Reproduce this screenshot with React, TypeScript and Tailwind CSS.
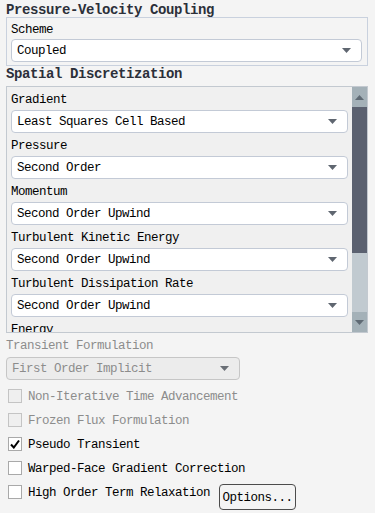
import React from "react";

const mono = "font-['Liberation_Mono','DejaVu_Sans_Mono',monospace]";

function Arrow({ color = "#5f6670" }: { color?: string }) {
  return (
    <svg width="9" height="5" viewBox="0 0 9 5" className="shrink-0">
      <polygon points="0,0 9,0 4.5,5" fill={color} />
    </svg>
  );
}

function Select({ value, disabled = false, className = "" }: { value: string; disabled?: boolean; className?: string }) {
  return (
    <div
      className={`flex h-[23px] items-center justify-between rounded-[4px] border pl-[5px] pr-[10px] ${
        disabled ? "border-[#c6c6c6] bg-[#ececec] text-[#8c8c8c]" : "border-[#c3cad6] bg-white text-black"
      } ${className}`}
    >
      <span className="pt-[2px] leading-none">{value}</span>
      <Arrow color={disabled ? "#6a6f76" : "#5f6670"} />
    </div>
  );
}

function Field({ label, value }: { label: string; value: string }) {
  return (
    <div>
      <div className="flex h-[23px] items-center pt-[3px] leading-none text-black">{label}</div>
      <Select value={value} />
    </div>
  );
}

function Check({ label, checked = false, disabled = false }: { label: string; checked?: boolean; disabled?: boolean }) {
  return (
    <div className="flex h-[24px] items-center gap-[6px] pl-[8px]">
      <div
        className={`flex h-[14px] w-[14px] items-center justify-center border ${
          disabled ? "border-[#c4c4c4] bg-[#efefef]" : "border-[#a9a9a9] bg-white"
        }`}
      >
        {checked && (
          <svg width="10" height="10" viewBox="0 0 10 10">
            <path d="M1 5.5 L3.8 8.5 L9 1.5" stroke="#000" strokeWidth="2" fill="none" />
          </svg>
        )}
      </div>
      <span className={`pt-[2px] ${disabled ? "text-[#8c8c8c]" : "text-black"}`}>{label}</span>
    </div>
  );
}

export default function App() {
  const fields = [
    ["Gradient", "Least Squares Cell Based"],
    ["Pressure", "Second Order"],
    ["Momentum", "Second Order Upwind"],
    ["Turbulent Kinetic Energy", "Second Order Upwind"],
    ["Turbulent Dissipation Rate", "Second Order Upwind"],
    ["Energy", "Second Order Upwind"],
  ];

  return (
    <div className={`h-[513px] w-[375px] overflow-hidden bg-[#f4f4f4] text-[12.5px] tracking-[-0.5px] ${mono}`}>
      {/* Pressure-Velocity Coupling */}
      <div className="flex h-[17px] items-center pl-[6px] pt-[3px] text-[14px] font-bold leading-none tracking-[-0.4px] text-[#2c303a]">
        Pressure-Velocity Coupling
      </div>
      <div className="ml-[6px] w-[362px] border border-[#c9d1de] pb-[3px] pl-[4px] pr-[5px]">
        <div className="flex h-[21px] items-center pt-[3px] leading-none text-black">Scheme</div>
        <Select value="Coupled" />
      </div>

      {/* Spatial Discretization */}
      <div className="flex h-[20px] items-end pb-[1px] pl-[6px] text-[14px] font-bold tracking-[-0.4px] text-[#2c303a]">
        Spatial Discretization
      </div>
      <div className="ml-[6px] flex h-[247px] w-[362px] border border-[#c3c9d0] bg-[#f0f0f0]">
        <div className="flex-1 overflow-hidden pl-[4px] pr-[4px]">
          {fields.map(([l, v]) => (
            <Field key={l} label={l} value={v} />
          ))}
        </div>
        <div className="flex w-[15px] flex-col">
          <div className="flex h-[20px] items-center justify-center bg-[#a4b1b8]">
            <svg width="9" height="5" viewBox="0 0 9 5">
              <polygon points="0,5 9,5 4.5,0" fill="#5f6a74" />
            </svg>
          </div>
          <div className="h-[146px] bg-[#5b6170]" />
          <div className="flex-1 bg-[#c1cad0]" />
          <div className="flex h-[20px] items-center justify-center bg-[#a4b1b8]">
            <Arrow color="#5f6a74" />
          </div>
        </div>
      </div>

      {/* Transient Formulation */}
      <div className="flex h-[24px] items-center pl-[6px] pt-[2px] leading-none text-[#8c8c8c]">Transient Formulation</div>
      <Select value="First Order Implicit" disabled className="ml-[6px] w-[234px]" />

      <div className="mt-[4px]">
        <Check label="Non-Iterative Time Advancement" disabled />
        <Check label="Frozen Flux Formulation" disabled />
        <Check label="Pseudo Transient" checked />
        <Check label="Warped-Face Gradient Correction" />
        <div className="flex items-start">
          <Check label="High Order Term Relaxation" />
          <button className="ml-[9px] mt-[4px] flex h-[26px] w-[77px] items-center justify-center rounded-[4px] border border-[#4c4c4c] bg-[#f4f4f4] pt-[2px] text-black">
            Options...
          </button>
        </div>
      </div>
    </div>
  );
}
